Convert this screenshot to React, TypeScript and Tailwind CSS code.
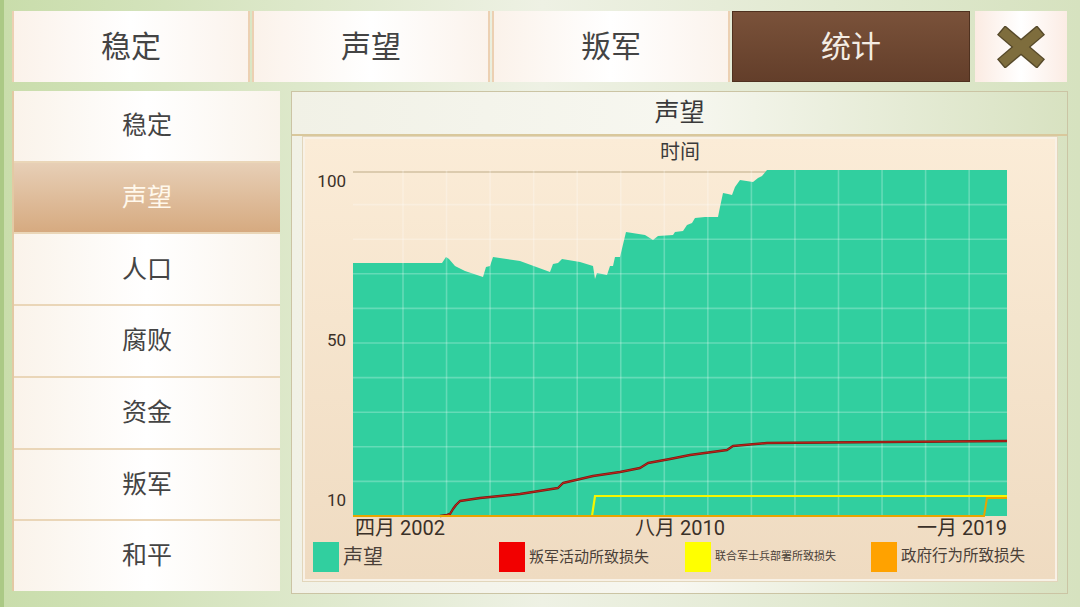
import React from "react";

type Pt = [number, number];

const tabs = ["稳定", "声望", "叛军", "统计"];
const activeTab = "统计";

const sideItems = ["稳定", "声望", "人口", "腐败", "资金", "叛军", "和平"];
const activeSide = "声望";

// plot coords are in page pixels, the <g> below shifts them into the svg
const PLOT_X = 353;
const PLOT_Y = 165;
const PLOT_W = 654;
const PLOT_H = 353;

const prestigeArea: Pt[] = [
  [353, 516], [353, 263], [442, 263], [446, 257], [449, 259], [455, 266],
  [465, 271], [483, 277], [486, 267], [490, 266], [493, 257], [520, 261],
  [550, 272], [553, 264], [558, 263], [562, 259], [580, 262], [593, 266],
  [595, 279], [597, 273], [607, 275], [610, 266], [613, 266], [615, 257],
  [620, 257], [626, 232], [645, 235], [653, 240], [658, 236], [673, 235],
  [675, 232], [683, 231], [687, 225], [692, 223], [695, 218], [705, 217],
  [718, 217], [720, 207], [723, 193], [728, 194], [732, 195], [735, 187],
  [740, 180], [753, 182], [758, 178], [762, 176], [767, 170], [1007, 170],
  [1007, 516],
];

const rebelLoss: Pt[] = [
  [440, 516], [447, 515], [450, 514], [453, 509], [456, 505], [460, 501],
  [480, 498], [520, 494], [558, 488], [563, 483], [593, 476], [620, 472],
  [640, 468], [648, 463], [670, 459], [690, 455], [727, 450], [733, 446],
  [767, 443], [1007, 441],
];

const allianceLoss: Pt[] = [[353, 516], [592, 516], [595, 496], [1007, 496]];
const governmentLoss: Pt[] = [[353, 516], [984, 516], [987, 498], [1007, 498]];

const vLines = Array.from({ length: 14 }, (_, i) => 403 + i * 43.55);
const hLines = Array.from({ length: 9 }, (_, i) => 516 - (i + 1) * 34.6);

const pts = (list: Pt[]) => list.map(([x, y]) => `${x},${y}`).join(" ");

const legend = [
  { label: "声望", color: "bg-[#31cf9f]", text: "text-[20px]" },
  { label: "叛军活动所致损失", color: "bg-[#f20000]", text: "text-[15px]" },
  { label: "联合军士兵部署所致损失", color: "bg-[#ffff00]", text: "text-[11px]" },
  { label: "政府行为所致损失", color: "bg-[#ffa200]", text: "text-[15.5px]" },
];

function CloseIcon() {
  return (
    <svg width="48" height="42" viewBox="0 0 48 42">
      <g strokeLinecap="butt">
        <line x1="4" y1="4" x2="44" y2="38" stroke="#554829" strokeWidth="12.5" />
        <line x1="44" y1="4" x2="4" y2="38" stroke="#554829" strokeWidth="12.5" />
        <line x1="5" y1="5" x2="43" y2="37" stroke="#7e6d3d" strokeWidth="10" />
        <line x1="43" y1="5" x2="5" y2="37" stroke="#7e6d3d" strokeWidth="10" />
      </g>
    </svg>
  );
}

function Chart() {
  return (
    <svg width={PLOT_W} height={PLOT_H} className="block">
      <g transform={`translate(${-PLOT_X} ${-PLOT_Y})`}>
        <line x1={353} y1={172} x2={1007} y2={172} stroke="#dccbae" strokeWidth={2} />
        <polygon points={pts(prestigeArea)} fill="#31cf9f" />
        {vLines.map((x) => (
          <line key={x} x1={x} y1={170} x2={x} y2={516} stroke="#ffffff" strokeOpacity={0.25} strokeWidth={1.6} />
        ))}
        {hLines.map((y) => (
          <line key={y} x1={353} y1={y} x2={1007} y2={y} stroke="#ffffff" strokeOpacity={0.25} strokeWidth={1.6} />
        ))}
        <polyline points={pts(rebelLoss)} fill="none" stroke="#7a1a12" strokeWidth={2.4} strokeLinejoin="round" />
        <polyline points={pts(rebelLoss)} fill="none" stroke="#c4241a" strokeWidth={1} strokeLinejoin="round" />
        <polyline points={pts(allianceLoss)} fill="none" stroke="#f6f600" strokeWidth={2.2} />
        <polyline points={pts(governmentLoss)} fill="none" stroke="#e8a400" strokeWidth={2} />
      </g>
    </svg>
  );
}

export default function App() {
  return (
    <div className="box-border flex h-[607px] w-[1080px] flex-col overflow-hidden border-l-4 border-[#abc985] bg-linear-to-r from-[#c9ddab] via-[#eef1e4] to-[#d6e2bf] pl-[8px] pt-[11px] font-['Roboto','Noto_Sans_CJK_SC',sans-serif] text-[#444]">
      <div className="flex h-[71px]">
        <div className="flex gap-[2px]">
          {tabs.map((tab) =>
            tab === activeTab ? (
              <div
                key={tab}
                className="flex w-[238px] items-center justify-center border border-[#4f311f] bg-linear-to-b from-[#7a523a] to-[#633e2a] text-[30px] text-[#f4ede4]"
              >
                {tab}
              </div>
            ) : (
              <div
                key={tab}
                className="flex w-[238px] items-center justify-center border-x-2 border-[#ecd0b2] bg-linear-to-r from-[#fbf2ea] via-white to-[#fbf3ec] text-[30px]"
              >
                {tab}
              </div>
            ),
          )}
        </div>
        <button
          type="button"
          className="ml-[5px] flex w-[92px] items-center justify-center bg-linear-to-r from-[#fbebe2] via-white to-[#fbece4]"
        >
          <CloseIcon />
        </button>
      </div>

      <div className="mt-[9px] flex">
        <div className="grid h-[500px] w-[268px] grid-rows-7 gap-[2px] border-l-2 border-[#e3c9a3] bg-[#ead6b8]">
          {sideItems.map((item) =>
            item === activeSide ? (
              <div
                key={item}
                className="flex items-center justify-center bg-linear-to-b from-[#e7cfb6] to-[#d6aa80] text-[25px] text-[#fff8ec]"
              >
                {item}
              </div>
            ) : (
              <div
                key={item}
                className="flex items-center justify-center bg-linear-to-r from-[#faf3ea] via-white to-[#faf4ec] text-[25px]"
              >
                {item}
              </div>
            ),
          )}
        </div>

        <div className="ml-[11px] flex h-[503px] w-[777px] flex-col border border-[#cbc4a4] bg-linear-to-r from-[#f1f1e6] via-[#f7f7f0] to-[#d8e2c1]">
          <div className="flex h-[42px] items-center justify-center text-[25px] text-[#3a3a3a]">声望</div>
          <div className="h-[2px] bg-[#d9c89c]" />
          <div className="ml-[11px] mr-[10px] mt-[1px] flex h-[444px] flex-col border-2 border-[#f8f1e6] bg-linear-to-b from-[#fbecd7] to-[#efdbc1] shadow-[0_0_0_1px_#e2d6bb]">
            <div className="flex h-[26px] items-center justify-center text-[20px] text-[#3a3a3a]">时间</div>
            <div className="flex h-[353px]">
              <div className="relative w-[48px] text-[17px] text-[#3a3028]">
                <span className="absolute right-[7px] top-[6px] leading-[20px]">100</span>
                <span className="absolute right-[7px] top-[165px] leading-[20px]">50</span>
                <span className="absolute right-[7px] top-[325px] leading-[20px]">10</span>
              </div>
              <Chart />
            </div>
            <div className="ml-[48px] grid h-[20px] w-[654px] grid-cols-3 text-[20px] leading-[20px] text-[#3a3028]">
              <span className="pl-[2px] text-left">四月 2002</span>
              <span className="text-center">八月 2010</span>
              <span className="text-right">一月 2019</span>
            </div>
            <div className="mt-[2px] grid h-[34px] grid-cols-[186px_186px_186px_186px] pl-[8px]">
              {legend.map((l) => (
                <div key={l.label} className="flex items-center gap-[4px]">
                  <div className={`h-[30px] w-[26px] shrink-0 ${l.color}`} />
                  <span className={`${l.text} whitespace-nowrap text-[#4a4038]`}>{l.label}</span>
                </div>
              ))}
            </div>
          </div>
        </div>
      </div>
    </div>
  );
}
